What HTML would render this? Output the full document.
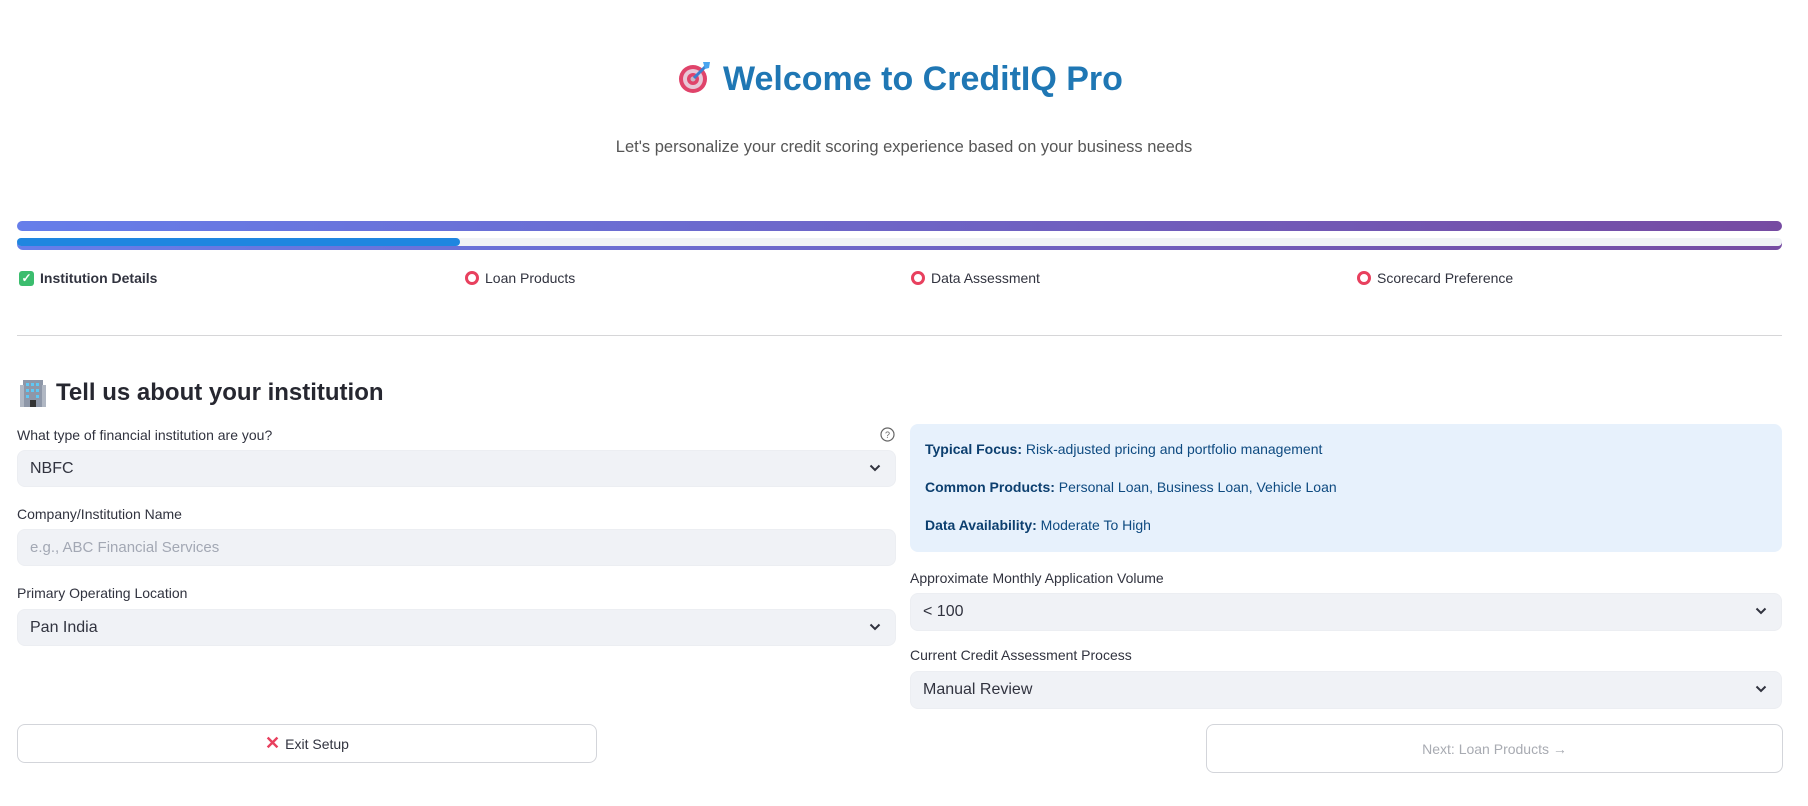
<!DOCTYPE html>
<html><head><meta charset="utf-8"><style>
*{box-sizing:border-box;margin:0;padding:0}
body{width:1808px;height:806px;background:#fff;font-family:"Liberation Sans",sans-serif;color:#31333f;position:relative;overflow:hidden}
.a{position:absolute}
.lbl{position:absolute;font-size:14px;color:#31333f;white-space:nowrap}
.sel{position:absolute;background:#f0f2f6;border-radius:8px;font-size:16px;color:#31333f;padding-left:12px;display:flex;align-items:center;border:1px solid #eceef2}
.chev{position:absolute;right:14px;top:50%;margin-top:-5px}
.step{position:absolute;top:270px;font-size:14px;white-space:nowrap;display:flex;align-items:center;gap:6px}
.ring{width:14px;height:14px;border-radius:50%;border:3px solid #e8405e;display:inline-block}
.info p{font-size:14px;color:#0e4a80;position:absolute;left:15px;white-space:nowrap}
.info b{color:#0c3f6f}
</style></head><body>
<div class="a" style="left:0;width:1800px;top:60px;text-align:center;font-size:34px;font-weight:bold;color:#1f77b4;">
<svg width="34" height="34" viewBox="0 0 34 34" style="vertical-align:-4px;margin-right:12px"><circle cx="16" cy="19" r="14" fill="#e0436a"/><circle cx="16" cy="19" r="10" fill="#e8c6d6"/><circle cx="16" cy="19" r="6" fill="#e0436a"/><circle cx="16" cy="19" r="2.5" fill="#c9b5c4"/><line x1="17" y1="18" x2="30" y2="5" stroke="#3a7fd0" stroke-width="3"/><path d="M26 2 L33 2 L32 8 L28 9 Z" fill="#4aa5ef"/></svg>Welcome to CreditIQ Pro</div>
<div class="a" style="left:0;width:1808px;top:138px;text-align:center;font-size:16.5px;color:#555">Let's personalize your credit scoring experience based on your business needs</div>

<div class="a" style="left:17px;width:1765px;top:221px;height:10px;border-radius:6px;background:linear-gradient(90deg,#667eea,#764ba2)"></div>
<div class="a" style="left:17px;width:1765px;top:238px;height:12px;border-radius:6px;background:linear-gradient(90deg,#667eea,#764ba2)"></div>
<div class="a" style="left:17px;width:1765px;top:238px;height:8px;border-radius:6px;background:#f0f2f6"></div>
<div class="a" style="left:17px;width:443px;top:238px;height:8px;border-radius:6px;background:#1f86e0"></div>

<div class="step" style="left:19px;font-weight:bold"><span style="width:15px;height:15px;background:#3bbd6e;border-radius:3px;color:#fff;font-size:12px;line-height:15px;text-align:center">✓</span>Institution Details</div>
<div class="step" style="left:465px"><span class="ring"></span>Loan Products</div>
<div class="step" style="left:911px"><span class="ring"></span>Data Assessment</div>
<div class="step" style="left:1357px"><span class="ring"></span>Scorecard Preference</div>

<div class="a" style="left:17px;width:1765px;top:335px;height:1px;background:#d6d6d8"></div>

<div class="a" style="left:20px;top:379px;display:flex;align-items:center;gap:10px;font-size:24px;font-weight:bold;color:#262730">
<svg width="26" height="28" viewBox="0 0 26 28"><rect x="3" y="1" width="20" height="27" fill="#8e97a8"/><rect x="0" y="6" width="4" height="22" fill="#b0b7c3"/><rect x="22" y="6" width="4" height="22" fill="#b0b7c3"/><g fill="#5fc8f5"><rect x="6" y="4" width="3" height="3"/><rect x="11" y="4" width="3" height="3"/><rect x="16" y="4" width="3" height="3"/><rect x="6" y="10" width="3" height="3"/><rect x="11" y="10" width="3" height="3"/><rect x="16" y="10" width="3" height="3"/><rect x="6" y="16" width="3" height="3"/><rect x="16" y="16" width="3" height="3"/></g><rect x="10" y="21" width="6" height="7" fill="#333"/></svg>Tell us about your institution</div>

<div class="lbl" style="left:17px;top:427px">What type of financial institution are you?</div>
<svg class="a" style="left:880px;top:427px" width="15" height="15" viewBox="0 0 15 15"><circle cx="7.5" cy="7.5" r="6.5" fill="none" stroke="#666" stroke-width="1.2"/><text x="7.5" y="11" font-size="9" text-anchor="middle" fill="#666" font-family="Liberation Sans">?</text></svg>
<div class="sel" style="left:17px;top:450px;width:879px;height:37px">NBFC<svg class="chev" width="12" height="8" viewBox="0 0 12 8"><path d="M1.5 1.5 L6 6 L10.5 1.5" fill="none" stroke="#31333f" stroke-width="2"/></svg></div>

<div class="lbl" style="left:17px;top:506px">Company/Institution Name</div>
<div class="sel" style="left:17px;top:529px;width:879px;height:37px;color:#a3a8b4;font-size:15px">e.g., ABC Financial Services</div>

<div class="lbl" style="left:17px;top:585px">Primary Operating Location</div>
<div class="sel" style="left:17px;top:609px;width:879px;height:37px">Pan India<svg class="chev" width="12" height="8" viewBox="0 0 12 8"><path d="M1.5 1.5 L6 6 L10.5 1.5" fill="none" stroke="#31333f" stroke-width="2"/></svg></div>

<div class="a info" style="left:910px;top:424px;width:872px;height:128px;background:#e7f1fc;border-radius:8px">
<p style="top:17px"><b>Typical Focus:</b> Risk-adjusted pricing and portfolio management</p>
<p style="top:55px"><b>Common Products:</b> Personal Loan, Business Loan, Vehicle Loan</p>
<p style="top:93px"><b>Data Availability:</b> Moderate To High</p>
</div>

<div class="lbl" style="left:910px;top:570px">Approximate Monthly Application Volume</div>
<div class="sel" style="left:910px;top:593px;width:872px;height:38px">&lt; 100<svg class="chev" width="12" height="8" viewBox="0 0 12 8"><path d="M1.5 1.5 L6 6 L10.5 1.5" fill="none" stroke="#31333f" stroke-width="2"/></svg></div>

<div class="lbl" style="left:910px;top:647px">Current Credit Assessment Process</div>
<div class="sel" style="left:910px;top:671px;width:872px;height:38px">Manual Review<svg class="chev" width="12" height="8" viewBox="0 0 12 8"><path d="M1.5 1.5 L6 6 L10.5 1.5" fill="none" stroke="#31333f" stroke-width="2"/></svg></div>

<div class="a" style="left:17px;top:724px;width:580px;height:39px;border:1px solid #d3d5da;border-radius:8px;display:flex;align-items:center;justify-content:center;font-size:14px;color:#31333f;gap:5px"><span style="color:#e8405e;font-weight:bold;font-size:18px">✕</span>Exit Setup</div>
<div class="a" style="left:1206px;top:724px;width:577px;height:49px;border:1px solid #d3d5da;border-radius:8px;display:flex;align-items:center;justify-content:center;font-size:14px;color:#a8abb2">Next: Loan Products →</div>
</body></html>
